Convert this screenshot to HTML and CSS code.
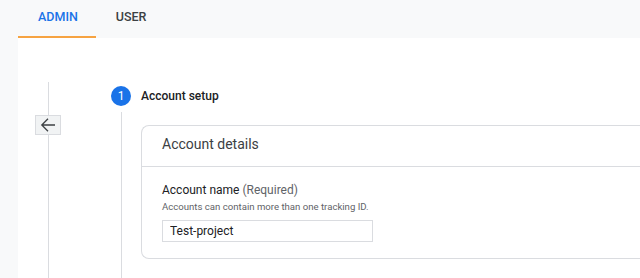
FILE: index.html
```html
<!DOCTYPE html>
<html>
<head>
  <title>Admin - Create account</title>
  <meta charset="UTF-8">
  <meta name="viewport" content="width=device-width, initial-scale=1.0">
  <link rel="stylesheet" href="styles.css">
</head>
<body>
  <div class="tabs">
    <div class="tab active">ADMIN</div>
    <div class="tab">USER</div>
  </div>

  <div class="main">
    <div class="rail">
      <div class="rail-line rail-top"></div>
      <button class="back" aria-label="Back">
        <svg width="16" height="16" viewBox="0 0 16 16">
          <path d="M15 8H1.8M8 1.8L1.8 8L8 14.2" fill="none" stroke="#3c4043" stroke-width="1.3"/>
        </svg>
      </button>
      <div class="rail-line rail-fill"></div>
    </div>

    <div class="stepper">
      <div class="step-head">
        <span class="step-num">1</span>
        <span class="step-title">Account setup</span>
      </div>
      <div class="step-body">
        <div class="step-line-col"><div class="step-line"></div></div>
        <div class="card">
          <div class="card-head">Account details</div>
          <div class="card-content">
            <label class="field-label" for="account-name">Account name <span class="muted">(Required)</span></label>
            <p class="hint">Accounts can contain more than one tracking ID.</p>
            <input id="account-name" class="field" type="text" value="Test-project">
          </div>
        </div>
      </div>
    </div>
  </div>
</body>
</html>
```

FILE: styles.css
```css
html, body {
  height: 100%;
}
body {
  margin: 0;
  font-family: Roboto, "Noto Sans", Arial, sans-serif;
  background-color: #f8f9fa;
  color: #202124;
  display: flex;
  flex-direction: column;
  overflow: hidden;
}
.tabs {
  display: flex;
  padding-left: 18px;
  height: 38px;
  flex-shrink: 0;
}
.tab {
  padding: 0 18px 0 20px;
  height: 36px;
  line-height: 34px;
  font-size: 12.5px;
  font-weight: 500;
  color: #3c4043;
  border-bottom: 2px solid transparent;
}
.tab.active {
  color: #1a73e8;
  border-bottom-color: #f6a341;
}
.main {
  flex: 1;
  margin-left: 18px;
  background-color: white;
  display: flex;
  padding-top: 44px;
  min-height: 0;
  overflow: hidden;
}
.rail {
  width: 60px;
  display: flex;
  flex-direction: column;
  align-items: center;
  flex-shrink: 0;
}
.rail-line {
  width: 1px;
  background-color: #dadce0;
}
.rail-top {
  height: 33px;
}
.rail-fill {
  flex: 1;
}
.back {
  width: 26px;
  height: 20px;
  padding: 0;
  border: 1px solid #dadce0;
  background-color: #f1f3f4;
  display: flex;
  align-items: center;
  justify-content: center;
}
.stepper {
  flex: 1;
  display: flex;
  flex-direction: column;
  margin-left: 33px;
}
.step-head {
  display: flex;
  align-items: center;
  height: 20px;
  margin-top: 4px;
}
.step-num {
  width: 20px;
  height: 20px;
  border-radius: 50%;
  background-color: #1a73e8;
  color: white;
  font-size: 12px;
  line-height: 20px;
  text-align: center;
}
.step-title {
  margin-left: 10px;
  font-size: 12px;
  font-weight: 500;
  color: #202124;
}
.step-body {
  flex: 1;
  display: flex;
  margin-top: 6px;
}
.step-line-col {
  width: 20px;
  display: flex;
  justify-content: center;
  flex-shrink: 0;
}
.step-line {
  width: 1px;
  background-color: #dadce0;
}
.card {
  margin: 13px 0 auto 10px;
  flex: 1;
  border: 1px solid #dadce0;
  border-right: none;
  border-radius: 8px 0 0 8px;
}
.card-head {
  height: 40px;
  line-height: 36px;
  padding-left: 20px;
  font-size: 14px;
  color: #3c4043;
  border-bottom: 1px solid #dadce0;
}
.card-content {
  padding: 16px 20px 16px;
}
.field-label {
  display: block;
  font-size: 12px;
  color: #202124;
}
.muted {
  color: #5f6368;
}
.hint {
  margin: 4px 0 8px;
  font-size: 9.6px;
  color: #5f6368;
}
.field {
  display: block;
  width: 211px;
  height: 22px;
  box-sizing: border-box;
  border: 1px solid #dadce0;
  padding: 0 7px;
  font-family: Roboto, "Noto Sans", Arial, sans-serif;
  font-size: 12px;
  color: #202124;
  margin: 0;
}
```
